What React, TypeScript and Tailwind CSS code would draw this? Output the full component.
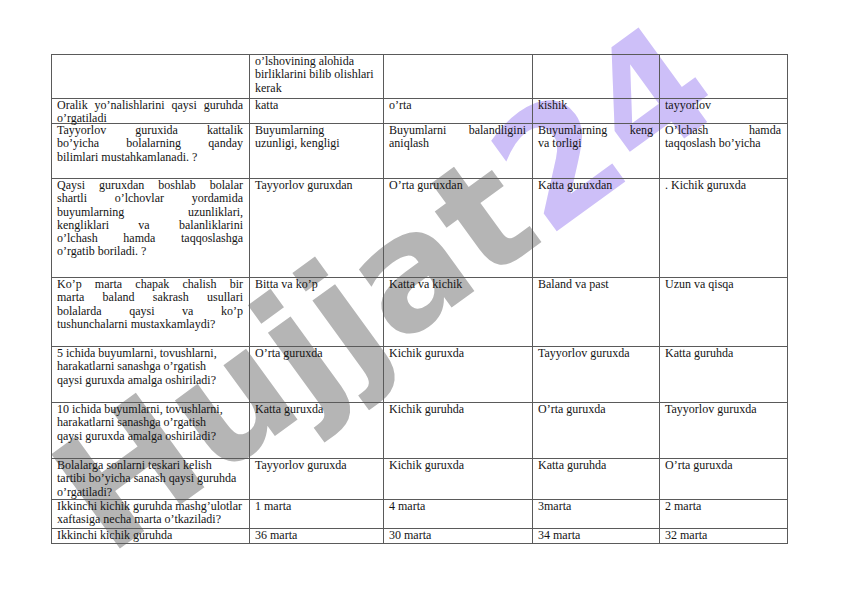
import React from 'react';

type Cell = { lines: string[]; justify?: boolean };

const cols = ['w-[198px]', 'w-[134px]', 'w-[149px]', 'w-[127px]', 'w-[128px]'];

// row heights measured from the page, line to line
const rows: { h: string; cells: Cell[] }[] = [
  {
    h: 'h-[44px]',
    cells: [
      { lines: [] },
      { lines: ['o’lshovining alohida', 'birliklarini bilib olishlari', 'kerak'] },
      { lines: [] },
      { lines: [] },
      { lines: [] },
    ],
  },
  {
    h: 'h-[25px]',
    cells: [
      { lines: ['Oralik yo’nalishlarini qaysi guruhda', 'o’rgatiladi'], justify: true },
      { lines: ['katta'] },
      { lines: ['o’rta'] },
      { lines: ['kishik'] },
      { lines: ['tayyorlov'] },
    ],
  },
  {
    h: 'h-[55px]',
    cells: [
      { lines: ['Tayyorlov guruxida kattalik', 'bo’yicha bolalarning qanday', 'bilimlari mustahkamlanadi. ?'], justify: true },
      { lines: ['Buyumlarning', 'uzunligi, kengligi'] },
      { lines: ['Buyumlarni balandligini', 'aniqlash'], justify: true },
      { lines: ['Buyumlarning keng', 'va torligi'], justify: true },
      { lines: ['O’lchash hamda', 'taqqoslash bo’yicha'], justify: true },
    ],
  },
  {
    h: 'h-[99px]',
    cells: [
      {
        lines: [
          'Qaysi guruxdan boshlab bolalar',
          'shartli o’lchovlar yordamida',
          'buyumlarning uzunliklari,',
          'kengliklari va balanliklarini',
          'o’lchash hamda taqqoslashga',
          'o’rgatib boriladi. ?',
        ],
        justify: true,
      },
      { lines: ['Tayyorlov guruxdan'] },
      { lines: ['O’rta guruxdan'] },
      { lines: ['Katta guruxdan'] },
      { lines: ['. Kichik guruxda'] },
    ],
  },
  {
    h: 'h-[69px]',
    cells: [
      {
        lines: [
          'Ko’p marta chapak chalish bir',
          'marta baland sakrash usullari',
          'bolalarda qaysi va ko’p',
          'tushunchalarni mustaxkamlaydi?',
        ],
        justify: true,
      },
      { lines: ['Bitta va ko’p'] },
      { lines: ['Katta va kichik'] },
      { lines: ['Baland va past'] },
      { lines: ['Uzun va qisqa'] },
    ],
  },
  {
    h: 'h-[56px]',
    cells: [
      { lines: ['5 ichida buyumlarni, tovushlarni,', 'harakatlarni sanashga o’rgatish', 'qaysi guruxda amalga oshiriladi?'] },
      { lines: ['O’rta guruxda'] },
      { lines: ['Kichik guruxda'] },
      { lines: ['Tayyorlov guruxda'] },
      { lines: ['Katta guruhda'] },
    ],
  },
  {
    h: 'h-[56px]',
    cells: [
      { lines: ['10 ichida buyumlarni, tovushlarni,', 'harakatlarni sanashga o’rgatish', 'qaysi guruxda amalga oshiriladi?'] },
      { lines: ['Katta guruxda'] },
      { lines: ['Kichik guruhda'] },
      { lines: ['O’rta guruxda'] },
      { lines: ['Tayyorlov guruxda'] },
    ],
  },
  {
    h: 'h-[41px]',
    cells: [
      { lines: ['Bolalarga sonlarni teskari kelish', 'tartibi bo’yicha sanash qaysi guruhda', 'o’rgatiladi?'] },
      { lines: ['Tayyorlov guruxda'] },
      { lines: ['Kichik guruxda'] },
      { lines: ['Katta guruhda'] },
      { lines: ['O’rta guruxda'] },
    ],
  },
  {
    h: 'h-[29px]',
    cells: [
      { lines: ['Ikkinchi kichik guruhda mashg’ulotlar', 'xaftasiga necha marta o’tkaziladi?'] },
      { lines: ['1 marta'] },
      { lines: ['4 marta'] },
      { lines: ['3marta'] },
      { lines: ['2 marta'] },
    ],
  },
  {
    h: 'h-[15px]',
    cells: [
      { lines: ['Ikkinchi kichik guruhda'] },
      { lines: ['36 marta'] },
      { lines: ['30 marta'] },
      { lines: ['34 marta'] },
      { lines: ['32 marta'] },
    ],
  },
];

function CellText({ cell }: { cell: Cell }) {
  return (
    <>
      {cell.lines.map((line, i) => {
        const stretch = cell.justify && i < cell.lines.length - 1;
        return (
          <div key={i} className={stretch ? 'text-justify [text-align-last:justify]' : 'text-left'}>
            {line}
          </div>
        );
      })}
    </>
  );
}

export default function App() {
  return (
    <div className="relative w-[842px] h-[596px] overflow-hidden bg-white">
      {/* watermark, sits behind the table */}
      <div
        className="absolute left-[385px] top-[288px] -translate-x-1/2 -translate-y-1/2 -rotate-[36deg] whitespace-nowrap text-[160px] leading-none font-bold select-none"
        style={{ fontFamily: '"DejaVu Sans", Lato, sans-serif' }}
      >
        <span className="text-[#b5b5b5]">Hujjat</span>
        <span className="text-[#cdbff8]">24</span>
      </div>

      <div className="relative pl-[51px] pt-[54px]">
        <div
          className="w-[737px] border-t border-l border-[#5a5a5a] text-[12px] leading-[13.25px] text-[#141414]"
          style={{ fontFamily: '"Liberation Serif", "Times New Roman", serif' }}
        >
          {rows.map((row, r) => (
            <div key={r} className={`flex ${row.h}`}>
              {row.cells.map((cell, c) => (
                <div key={c} className={`${cols[c]} shrink-0 border-r border-b border-[#5a5a5a] pl-[5px] pr-[6px]`}>
                  <CellText cell={cell} />
                </div>
              ))}
            </div>
          ))}
        </div>
      </div>
    </div>
  );
}
